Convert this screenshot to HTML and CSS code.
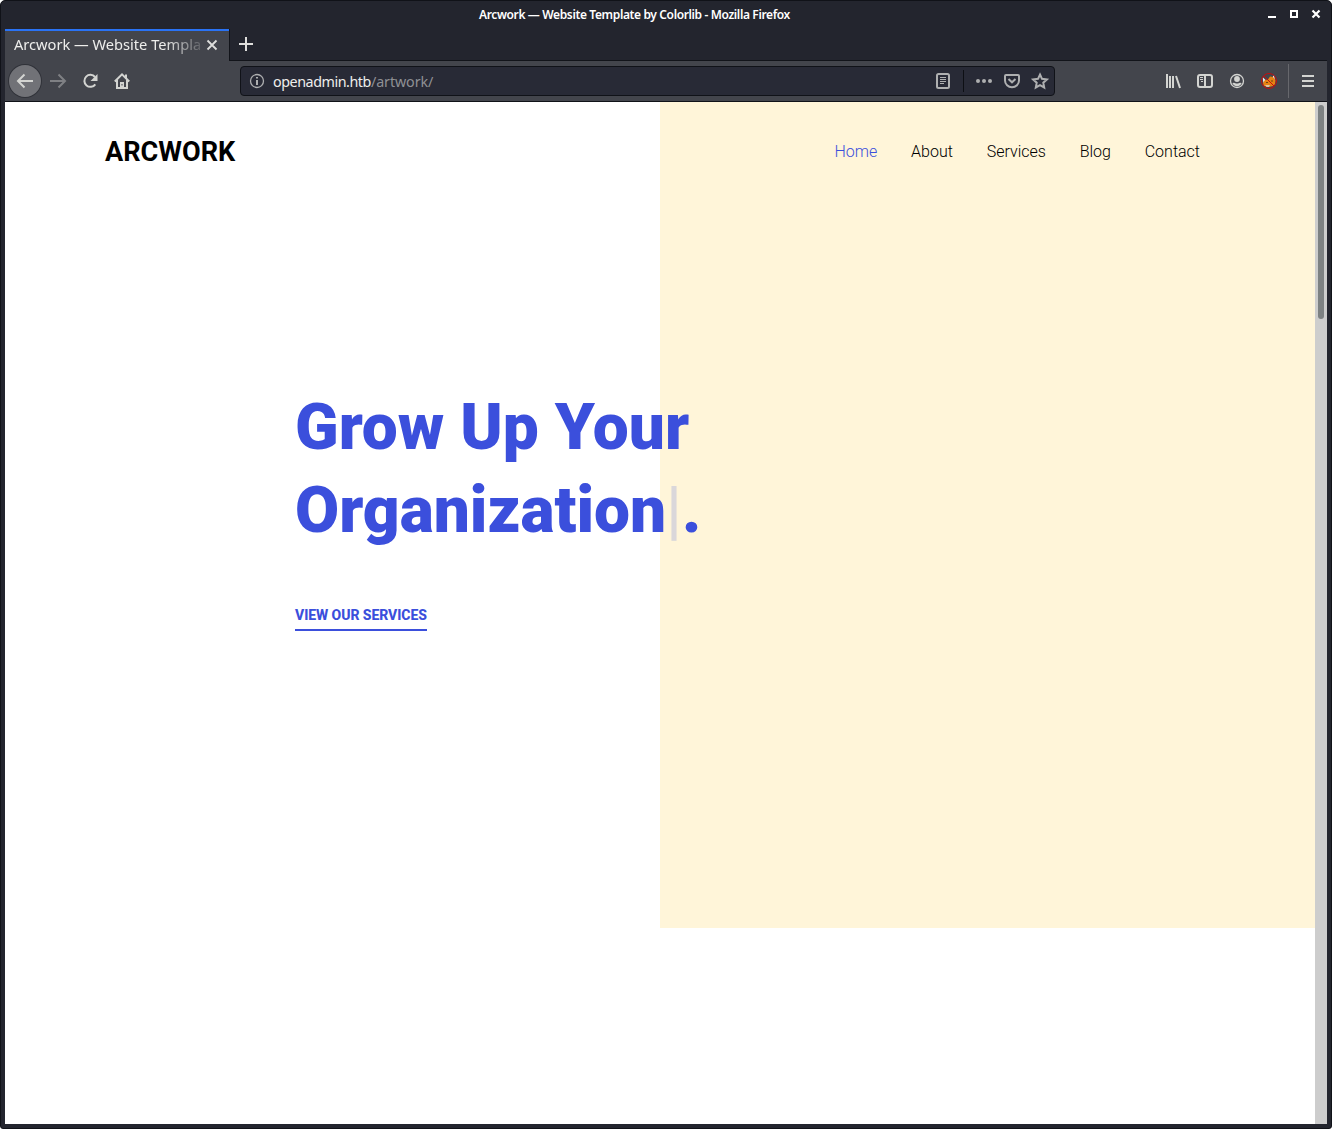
FILE: index.html
```html
<!DOCTYPE html>
<html lang="en">
<head>
<meta charset="utf-8">
<title>Arcwork — Website Template by Colorlib</title>
<link rel="stylesheet" href="styles.css">
</head>
<body>
<div class="window">
  <header class="titlebar">
    <span class="window-title">Arcwork — Website Template by Colorlib - Mozilla Firefox</span>
    <div class="window-buttons">
      <svg width="10" height="10"><path d="M1 6h8v2H1z" fill="#fff"/></svg>
      <svg width="10" height="10"><path d="M2 1h6v6H2z" fill="none" stroke="#fff" stroke-width="2"/></svg>
      <svg width="10" height="10"><path d="M1.500 .5l7 7m0-7l-7 7" fill="none" stroke="#fff" stroke-width="2.200"/></svg>
    </div>
  </header>

  <div class="tabstrip">
    <div class="tab">
      <span class="tab-label">Arcwork — Website Templa</span>
      <svg class="tab-close" width="12" height="12" viewBox="0 0 12 12"><path d="M1.500 1.500l9 9m0-9l-9 9"/></svg>
    </div>
    <div class="new-tab">
      <svg width="14" height="14" viewBox="0 0 14 14"><path d="M7 0v14M0 7h14"/></svg>
    </div>
  </div>

  <div class="toolbar">
    <div class="nav-buttons">
      <span class="back"><svg class="icon" width="16" height="16" viewBox="0 0 16 16"><path d="M16 8H1M7.500 1.500L1 8l6.500 6.500"/></svg></span>
      <svg class="icon dim" width="16" height="16" viewBox="0 0 16 16"><path d="M0 8h15M8.500 1.500L15 8l-6.500 6.500"/></svg>
      <svg class="icon" width="16" height="16" viewBox="0 0 16 16"><path d="M13.300 11.300A6 6 0 1 1 13 4"/><path class="fill" d="M15.500 1v7h-7z"/></svg>
      <svg class="icon" width="16" height="16" viewBox="0 0 16 16"><path d="M.8 8.500L8 1.300l7.200 7.200M3 7v8h10V7"/><path class="fill" d="M11 1.500h2v4h-2zM6 9h4v6H6z"/><path class="cut" d="M7.500 11h1v1.500h-1z"/></svg>
    </div>
    <div class="urlbar">
      <svg class="icon url-icon thin" width="16" height="16" viewBox="0 0 16 16"><circle cx="8" cy="8" r="6.500"/><path d="M8 7v5M8 4v1.500" stroke-width="2"/></svg>
      <span class="url"><span class="host">openadmin.htb</span><span class="path">/artwork/</span></span>
      <svg class="icon url-icon" width="16" height="16" viewBox="0 0 16 16"><rect x="2" y="1" width="12" height="14" rx="1.500"/><path class="hair" d="M5 4.500h6M5 6.500h6M5 8.500h6M5 10.500h4"/></svg>
      <i class="url-divider"></i>
      <svg class="icon url-icon" width="16" height="16" viewBox="0 0 16 16"><g class="fill"><circle cx="2" cy="8" r="2"/><circle cx="8" cy="8" r="2"/><circle cx="14" cy="8" r="2"/></g></svg>
      <svg class="icon url-icon" width="16" height="16" viewBox="0 0 16 16"><path d="M2 2h12q1 0 1 1v4.500a7 6.700 0 0 1-14 0V3q0-1 1-1zM4.500 6L8 9.300 11.500 6"/></svg>
      <svg class="icon url-icon" width="16" height="16" viewBox="0 0 16 16"><path d="M8 1.500l2 4.300 4.900.6-3.600 3.300.9 4.800L8 12.200l-4.200 2.300.9-4.800L1.100 6.400 6 5.800z"/></svg>
    </div>
    <div class="actions">
      <svg class="icon" width="16" height="16" viewBox="0 0 16 16"><path d="M2 1v14M5 3v12M8 3v12M11 3l4 12"/></svg>
      <svg class="icon" width="16" height="16" viewBox="0 0 16 16"><rect x="1" y="2" width="14" height="12" rx="2"/><path d="M8 2v12"/><path class="hair" d="M3 4.500h3M3 6.500h3M4 8.500h2"/></svg>
      <svg class="icon thin" width="16" height="16" viewBox="0 0 16 16"><circle cx="8" cy="8" r="6.500"/><circle class="fill" cx="8" cy="6" r="2.900"/><path class="fill" d="M3.300 10q2.200-.8 3 .2 1.700.7 3.400 0 .8-1 3-.2-1.700 3.200-4.700 3.200T3.300 10z"/></svg>
      <svg width="16" height="16" viewBox="0 0 16 16"><path d="M1.500 4l1 6 3-2zM13 2l-2 3 3 3z" fill="#eee"/><path d="M2 10l2-3 3-.5 2-3 3 .5 2.500 3-.5 4-2 2-4 1-5-1z" fill="#e68213"/><path d="M4 12h5l-1 2H5.500z" fill="#d9c5a5"/><path d="M5 9.500h2m3-1.500h2" stroke="#704011"/><circle cx="8" cy="8" r="7.500" stroke="#c60c0c" fill="none"/><path d="M3 3l10 10" stroke="#c60c0c"/></svg>
    </div>
    <div class="menu">
      <svg class="icon" width="16" height="16" viewBox="0 0 16 16"><path d="M2 3h12M2 8h12M2 13h12"/></svg>
    </div>
  </div>

  <div class="viewport">
    <main class="page">
      <nav class="site-nav">
        <a class="logo">ARCWORK</a>
        <div class="links">
          <a class="active">Home</a><a>About</a><a>Services</a><a>Blog</a><a>Contact</a>
        </div>
      </nav>
      <section class="hero">
        <h1>Grow Up Your<br>Organization<span class="cursor">|</span>.</h1>
        <a class="cta">VIEW OUR SERVICES</a>
      </section>
    </main>
    <div class="scrollbar"><div class="thumb"></div></div>
  </div>
</div>
</body>
</html>
```

FILE: styles.css
```css
* { box-sizing: border-box; }
body { margin: 0; background: #fff; }
svg { display: block; flex: none; overflow: visible; }

.window {
  width: 1332px;
  height: 1129px;
  display: flex;
  flex-direction: column;
  padding: 0 4px 4px;
  background: #23252e;
  border: 1px solid #101218;
  border-radius: 5px 5px 3px 3px;
  font-family: "Noto Sans", sans-serif;
}

.titlebar {
  height: 28px;
  display: grid;
  grid-template-columns: 1fr auto;
  align-items: center;
  flex: none;
}
.window-title {
  padding-left: 474px;
  font-size: 12px;
  font-weight: 600;
  line-height: 16px;
  letter-spacing: -0.37px;
  color: #fff;
  white-space: nowrap;
}
.window-buttons { display: flex; gap: 12px; padding-right: 6px; }

.tabstrip { display: flex; height: 32px; flex: none; }
.tab {
  width: 224px;
  display: flex;
  align-items: center;
  padding: 0 11px 0 9px;
  background: #43454c;
  border-top: 2px solid #2a73f5;
}
.tab-label {
  width: 187px;
  margin-right: 5px;
  padding-bottom: 4px;
  white-space: nowrap;
  font-size: 14.67px;
  line-height: 22px;
  letter-spacing: -0.02px;
  color: #eeeeec;
  -webkit-mask-image: linear-gradient(to right, #000 150px, transparent 194px);
  mask-image: linear-gradient(to right, #000 150px, transparent 194px);
}
.tab-close, .new-tab svg { fill: none; stroke: #dededc; stroke-width: 2; }
.tab-close { margin-bottom: 2px; stroke-width: 1.8; }
.new-tab {
  flex: 1;
  padding: 8px 0 0 9px;
  border-left: 1px solid #12141a;
  border-bottom: 1px solid #12141a;
}

.toolbar {
  height: 41px;
  flex: none;
  display: flex;
  align-items: center;
  background: #43454c;
  border-bottom: 1px solid #101218;
}
.icon { fill: none; stroke: #d3d4d1; stroke-width: 2; }
.icon.thin { stroke-width: 1.3; }
.icon .fill { fill: #d3d4d1; stroke: none; }
.icon .cut { fill: #43454c; stroke: none; }
.icon .hair { stroke-width: 1; }
.icon.dim { stroke: #7f8084; }
.nav-buttons { display: flex; align-items: center; gap: 16px; width: 235px; padding-left: 4px; }
.back {
  width: 32px;
  height: 32px;
  margin-right: -7px;
  display: grid;
  place-items: center;
  border-radius: 50%;
  background: #717277;
  box-shadow: 0 0 0 1px #303239;
}
.urlbar {
  width: 815px;
  height: 30px;
  display: flex;
  align-items: center;
  padding: 0 6px 0 8px;
  background: #282a36;
  border: 1px solid #101218;
  border-radius: 4px;
}
.url-icon { stroke: #aeafb0; margin-right: 12px; }
.url-icon .fill { fill: #aeafb0; }
.url-icon:first-child { margin-right: 8px; }
.url-icon:last-child { margin-right: 0; }
.url { flex: 1; padding-top: 2px; font-size: 14.3px; line-height: 22px; color: #eeeeec; }
.host { letter-spacing: -0.44px; }
.path { color: #8f9094; letter-spacing: -0.1px; }
.url-divider { width: 1px; height: 22px; background: #0d0f14; margin-right: 12px; }
.actions { display: flex; gap: 16px; margin-left: 110px; }
.menu { height: 34px; margin-left: 11px; padding: 9px 0 0 11px; border-left: 1px solid #67686d; }

.viewport { flex: 1; display: flex; min-height: 0; background: #fff; }
.page {
  flex: 1;
  font-family: Roboto, sans-serif;
  background: linear-gradient(#fff5d9, #fff5d9) 655px 0 / 655px 826px no-repeat;
}
.site-nav {
  display: flex;
  justify-content: space-between;
  align-items: center;
  height: 100px;
  padding: 0 115px 0 100px;
}
.logo { font-size: 27.1px; font-weight: 700; color: #000; }
.links {
  display: flex;
  gap: 33.8px;
  padding-bottom: 2px;
  font-size: 16px;
  font-weight: 300;
  color: #000;
}
.links .active { color: #3b4fdc; }
.hero { padding: 184px 0 0 290px; }
h1 {
  margin: 0 0 51px;
  font-size: 64px;
  font-weight: 900;
  line-height: 83.2px;
  color: #3b4fdc;
}
.cursor { font-weight: 500; color: #dad7da; }
.cta {
  display: inline-block;
  height: 28px;
  padding-top: 4px;
  font-size: 14px;
  font-weight: 800;
  line-height: 16px;
  letter-spacing: -0.06px;
  color: #3b4fdc;
  border-bottom: 2px solid #3b4fdc;
}
.scrollbar { width: 12px; padding: 3px 3px 0; background: #cdcdcd; }
.thumb { height: 214px; border-radius: 3px; background: #7d8182; }
```
